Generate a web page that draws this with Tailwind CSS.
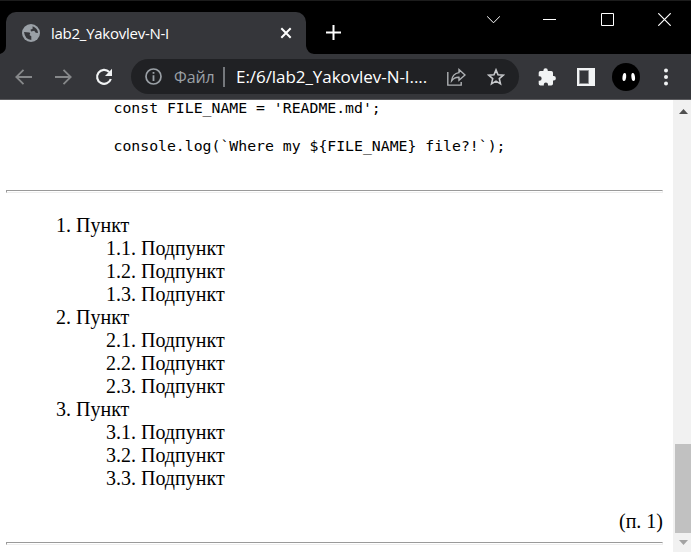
<!DOCTYPE html>
<html lang="ru">
<head>
<meta charset="utf-8">
<title>lab2_Yakovlev-N-I</title>
<script src="https://cdn.jsdelivr.net/npm/@tailwindcss/browser@4"></script>
</head>
<body class="w-[691px] h-[552px] overflow-hidden bg-white flex flex-col">
<header class="h-[54px] shrink-0 bg-black border-t border-[#1c1c1c] flex">
  <div class="w-[6px] h-full flex items-end overflow-hidden"><svg class="shrink-0" width="6" height="8" viewBox="0 0 6 8"><path d="M6 0Q6 6 0 8H6Z" fill="#35363a"/></svg></div>
  <div class="mt-[11px] w-[300px] h-[42px] rounded-t-[10px] bg-[#35363a] flex items-center pl-[16px] pr-[14px]">
    <svg width="18" height="18" viewBox="0 0 18 18"><circle cx="9" cy="9" r="9" fill="#9aa0a6"/><path d="M2 8L7.6 8.4Q9 9.8 7.4 11L9.3 12.2V16Q3 15.6 2 8ZM10.6 2.2Q15.8 4.2 16 9L13.7 8.8L12.2 6.8L9.2 7.4L8.4 5.8L10.6 4.8Z" fill="#35363a"/></svg>
    <span class="ml-[11px] w-[125px] whitespace-nowrap font-['Open_Sans',sans-serif] text-[15px] leading-[20px] tracking-[-0.26px] text-white -mt-px">lab2_Yakovlev-N-I</span>
    <svg class="ml-auto" width="12" height="12" viewBox="0 0 12 12" fill="none" stroke="#fff" stroke-width="2"><path d="M1.3 1.3L10.7 10.7M10.7 1.3L1.3 10.7"/></svg>
  </div>
  <div class="w-[8px] h-full flex items-end"><svg width="8" height="8" viewBox="0 0 8 8"><path d="M0 0Q1 7 8 8H0Z" fill="#35363a"/></svg></div>
  <svg class="mt-[24px] ml-[12px]" width="15" height="15" viewBox="0 0 15 15" stroke="#fff" stroke-width="2"><path d="M0 7.5H15M7.5 0V15"/></svg>
  <div class="ml-auto mt-[12px] mr-[20px] flex h-[13px] items-center text-white">
    <svg width="13" height="13" viewBox="0 0 13 13" fill="none" stroke="currentColor"><path d="M0 3.2L6.5 9.8L13 3.2"/></svg>
    <svg class="ml-[43px]" width="13" height="13" viewBox="0 0 13 13" fill="none" stroke="currentColor"><path d="M0 6.5H13"/></svg>
    <svg class="ml-[45px]" width="13" height="13" viewBox="0 0 13 13" fill="none" stroke="currentColor"><path d="M.5 .5H12.5V12.5H.5Z"/></svg>
    <svg class="ml-[44px]" width="13" height="13" viewBox="0 0 13 13" fill="none" stroke="currentColor" stroke-width="1.2"><path d="M.3 .3L12.7 12.7M12.7 .3L.3 12.7"/></svg>
  </div>
</header>
<div class="h-[46px] shrink-0 bg-[#35363a] border-b border-[#5c5c5f] flex items-center pl-[15px]">
  <svg width="17" height="16" viewBox="0 0 17 16" fill="none" stroke="#86888a" stroke-width="1.8"><path d="M17 8H1.5M8.5 .8L1.3 8L8.5 15.2"/></svg>
  <svg class="ml-[23px]" width="17" height="16" viewBox="0 0 17 16" fill="none" stroke="#86888a" stroke-width="1.8"><path d="M0 8H15.5M8.5 .8L15.7 8L8.5 15.2"/></svg>
  <svg class="ml-[23px]" width="18" height="18" viewBox="0 0 18 18"><path d="M14.2 4A7 7 0 1 0 15.8 11" fill="none" stroke="#f1f3f4" stroke-width="2.2"/><path d="M17 .8V8H10Z" fill="#f1f3f4"/></svg>
  <div class="ml-[18px] w-[388px] h-[35px] rounded-full bg-[#202124] flex items-center pl-[14px] pr-[14px]">
    <svg width="17" height="17" viewBox="0 0 17 17"><circle cx="8.5" cy="8.5" r="7.5" fill="none" stroke="#9aa0a6" stroke-width="1.7"/><path d="M7.6 4H9.4V5.8H7.6ZM7.6 7.2H9.4V13H7.6Z" fill="#9aa0a6"/></svg>
    <span class="ml-[12px] w-[41px] font-['Open_Sans',sans-serif] text-[16px] leading-[22px] tracking-[-0.1px] text-[#9aa0a6]">Файл</span>
    <span class="ml-[8px] w-[2px] h-[20px] bg-[#75787c]"></span>
    <span class="ml-[11px] w-[192px] whitespace-nowrap font-['Open_Sans',sans-serif] text-[17px] leading-[22px] tracking-[-0.06px] text-white">E:/6/lab2_Yakovlev-N-I....</span>
    <svg class="ml-auto" width="19" height="18" viewBox="0 0 19 18" fill="none" stroke="#aeb1b4" stroke-width="1.4"><path d="M.8 4V17.1H14.2V14M12 1.6L18 7L12 12.2V9.3Q7.5 9 4.6 12.8Q5.4 5.4 12 4.6Z"/></svg>
    <svg class="ml-[21px]" width="18" height="18" viewBox="0 0 18 18" fill="none" stroke="#c5c7ca" stroke-width="1.6"><path d="M9 1.9L11 6.8L16.3 7.2L12.3 10.6L13.5 15.9L9 13.1L4.5 15.9L5.7 10.6L1.7 7.2L7 6.8Z"/></svg>
  </div>
  <svg class="ml-[19px]" width="18" height="18" viewBox="0 0 18 18"><path d="M5.4 3V2.4A2.2 2.2 0 0 1 9.8 2.4V3H13.2Q15 3 15 4.8V8H15.7A2.2 2.2 0 0 1 15.7 12.4H15V15.8Q15 17.5 13.2 17.5H10V16.6A2.1 2.1 0 0 0 5.8 16.6V17.5H2.4Q.7 17.5 .7 15.8V12.7H1.4A2.2 2.2 0 0 0 1.4 8.2H.7V4.8Q.7 3 2.4 3Z" fill="#f1f3f4"/></svg>
  <svg class="ml-[21px]" width="18" height="18" viewBox="0 0 18 18"><path d="M0 0H18V18H0Z" fill="#f1f3f4"/><path d="M2.5 2.5H11.5V15.5H2.5Z" fill="#35363a" stroke="#8b8c8f"/></svg>
  <svg class="ml-[17px]" width="28" height="28" viewBox="0 0 28 28"><circle cx="14" cy="14" r="14" fill="#000"/><ellipse cx="12.3" cy="14" rx="1.8" ry="4.1" fill="#fff" transform="rotate(7 12.3 14)"/><ellipse cx="21.2" cy="14" rx="1.8" ry="4.1" fill="#fff" transform="rotate(-7 21.2 14)"/></svg>
  <svg class="ml-[24px]" width="4" height="18" viewBox="0 0 4 18" fill="#f1f3f4"><circle cx="2" cy="2.6" r="2"/><circle cx="2" cy="9" r="2"/><circle cx="2" cy="15.4" r="2"/></svg>
</div>
<div class="flex flex-1 min-h-0">
  <main class="w-[673px] pl-[6px] pr-[10px] overflow-hidden text-black font-['Liberation_Serif',serif] text-[20px] leading-[23px]">
    <pre class="h-[91px] -mt-[2px] pl-[107.5px] font-['DejaVu_Sans_Mono',monospace] text-[14.81px] leading-[19px]">const FILE_NAME = 'README.md';

console.log(`Where my ${FILE_NAME} file?!`);</pre>
    <div class="h-[3px] mt-px border border-[#9a9a9a] border-r-[#eee] border-b-[#eee]"></div>
    <div class="mt-[21px] pl-[50px] flex flex-col whitespace-nowrap">
      <div>1. Пункт</div>
      <div class="pl-[50px]"><div>1.1. Подпункт</div><div>1.2. Подпункт</div><div>1.3. Подпункт</div></div>
      <div>2. Пункт</div>
      <div class="pl-[50px]"><div>2.1. Подпункт</div><div>2.2. Подпункт</div><div>2.3. Подпункт</div></div>
      <div>3. Пункт</div>
      <div class="pl-[50px]"><div>3.1. Подпункт</div><div>3.2. Подпункт</div><div>3.3. Подпункт</div></div>
    </div>
    <div class="mt-[20px] text-right">(п. 1)</div>
    <div class="h-[3px] mt-[9px] border border-[#9a9a9a] border-r-[#eee] border-b-[#eee]"></div>
  </main>
  <div class="w-[18px] bg-[#f1f1f1] flex flex-col items-center pl-[2px]">
    <svg class="mt-[9px] shrink-0" width="9" height="5" viewBox="0 0 9 5"><path d="M0 5L4.5 0L9 5Z" fill="#505050"/></svg>
    <div class="mt-[330px] w-full h-[89px] shrink-0 bg-[#c1c1c1]"></div>
    <svg class="mt-[7px] shrink-0" width="9" height="5" viewBox="0 0 9 5"><path d="M0 0L4.5 5L9 0Z" fill="#a3a3a3"/></svg>
  </div>
</div>
</body>
</html>
